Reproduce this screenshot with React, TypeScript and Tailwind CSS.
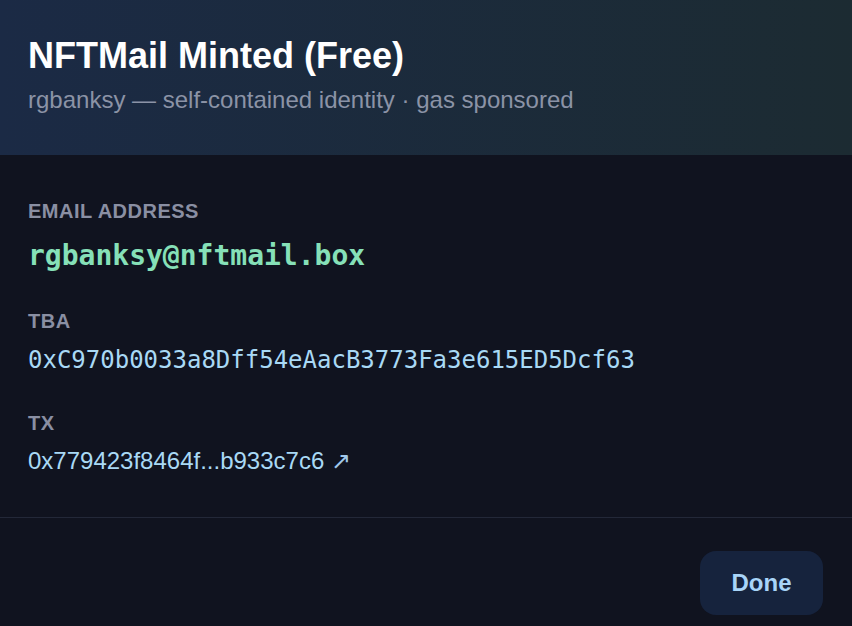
import React from 'react';

interface Field {
  label: string;
  value: string;
  kind: 'email' | 'mono' | 'link';
}

const fields: Field[] = [
  { label: 'Email Address', value: 'rgbanksy@nftmail.box', kind: 'email' },
  { label: 'TBA', value: '0xC970b0033a8Dff54eAacB3773Fa3e615ED5Dcf63', kind: 'mono' },
  { label: 'TX', value: '0x779423f8464f...b933c7c6', kind: 'link' },
];

const FieldRow = ({ field }: { field: Field }) => (
  <div className="flex flex-col">
    <span className="text-[20px] leading-[28px] font-bold uppercase tracking-[0.5px] text-[#8a8fa3]">
      {field.label}
    </span>
    {field.kind === 'email' && (
      <span className="mt-[13px] font-['DejaVu_Sans_Mono',monospace] text-[28px] leading-[36px] font-bold text-[#86e0b8]">
        {field.value}
      </span>
    )}
    {field.kind === 'mono' && (
      <span className="mt-[9px] font-['DejaVu_Sans_Mono',monospace] text-[24px] leading-[32px] text-[#a9d9f5]">
        {field.value}
      </span>
    )}
    {field.kind === 'link' && (
      <a className="mt-2 text-[24px] leading-[32px] text-[#a9d9f5] cursor-pointer">
        {field.value} <span className="text-[#a0c8ea]">↗</span>
      </a>
    )}
  </div>
);

export default function App() {
  return (
    <div className="min-h-screen w-full bg-[#10131f] font-['Liberation_Sans',Arial,sans-serif]">
      {/* Header */}
      <div className="bg-gradient-to-r from-[#1b2a45] to-[#1c2b32] pl-7 pr-7 pt-[36px] pb-[39px]">
        <h1 className="text-[36px] leading-[40px] font-bold text-white">NFTMail Minted (Free)</h1>
        <p className="mt-2 text-[24px] leading-[32px] text-[#8b93a6]">
          rgbanksy — self-contained identity · gas sponsored
        </p>
      </div>

      {/* Body */}
      <div className="flex flex-col gap-[33px] px-7 pt-[42px] pb-[40px]">
        {fields.map((f) => (
          <FieldRow key={f.label} field={f} />
        ))}
      </div>

      {/* Footer */}
      <div className="flex justify-end border-t border-[#232838] px-[29px] pt-[33px] pb-[33px]">
        <button className="h-[64px] w-[123px] rounded-2xl bg-[#16233d] text-[24px] font-bold text-[#a8d4f8]">
          Done
        </button>
      </div>
    </div>
  );
}
